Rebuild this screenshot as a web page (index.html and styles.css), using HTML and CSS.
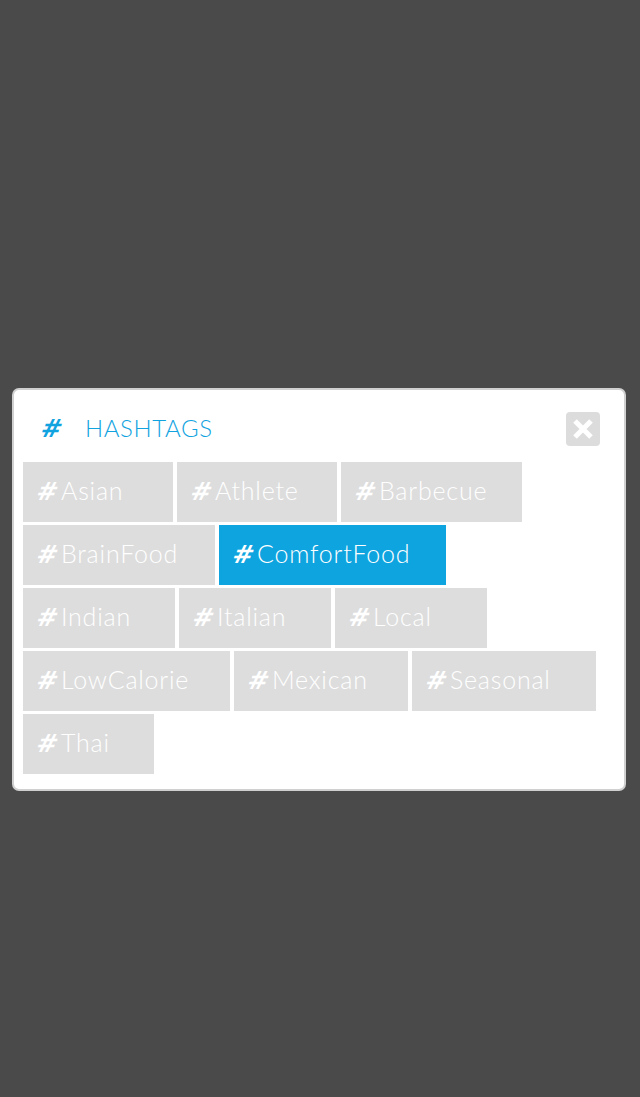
FILE: index.html
```html
<!DOCTYPE html>
<html>
<head>
<meta charset="utf-8">
<link rel="stylesheet" href="styles.css">
</head>
<body>
<div class="screen">
  <div class="modal">
    <div class="modal-header">
      <span class="title-hash">#</span>
      <span class="title">HASHTAGS</span>
      <button class="close" aria-label="Close">
        <svg width="22" height="22" viewBox="0 0 22 22"><path d="M3 3 L19 19 M19 3 L3 19" stroke="#fff" stroke-width="5" stroke-linecap="butt"/></svg>
      </button>
    </div>
    <div class="tags">
      <div class="tag-row">
        <div class="tag w-asian"><span class="label"><span class="hash">#</span>Asian</span></div>
        <div class="tag w-athlete"><span class="label"><span class="hash">#</span>Athlete</span></div>
        <div class="tag w-barbecue"><span class="label"><span class="hash">#</span>Barbecue</span></div>
      </div>
      <div class="tag-row">
        <div class="tag w-brainfood"><span class="label"><span class="hash">#</span>BrainFood</span></div>
        <div class="tag w-comfortfood active"><span class="label"><span class="hash">#</span>ComfortFood</span></div>
      </div>
      <div class="tag-row">
        <div class="tag w-indian"><span class="label"><span class="hash">#</span>Indian</span></div>
        <div class="tag w-italian"><span class="label"><span class="hash">#</span>Italian</span></div>
        <div class="tag w-local"><span class="label"><span class="hash">#</span>Local</span></div>
      </div>
      <div class="tag-row">
        <div class="tag w-lowcalorie"><span class="label"><span class="hash">#</span>LowCalorie</span></div>
        <div class="tag w-mexican"><span class="label"><span class="hash">#</span>Mexican</span></div>
        <div class="tag w-seasonal"><span class="label"><span class="hash">#</span>Seasonal</span></div>
      </div>
      <div class="tag-row">
        <div class="tag w-thai"><span class="label"><span class="hash">#</span>Thai</span></div>
      </div>
    </div>
  </div>
</div>
</body>
</html>
```
FILE: styles.css
```css
* { box-sizing: border-box; }
html, body { margin: 0; padding: 0; }
body {
  background: #4a4a4a;
  font-family: Lato, "Open Sans", sans-serif;
  width: 640px;
  height: 1097px;
  overflow: hidden;
}
.screen {
  padding: 388px 14px 0 12px;
}
.modal {
  background: #fff;
  border: 2px solid #d0d0d0;
  border-radius: 7px;
  width: 614px;
  height: 403px;
  padding: 22px 24px 15px 9px;
}
.modal-header {
  display: flex;
  align-items: center;
  height: 34px;
  margin-bottom: 16px;
  color: #11a3e0;
}
.title-hash {
  font-family: "DejaVu Sans", sans-serif;
  font-weight: 700;
  font-size: 25px;
  margin-left: 18px;
  width: 44px;
  padding-bottom: 2px;
  transform: skewX(-14deg);
}
.title {
  font-weight: 300;
  font-size: 24px;
  letter-spacing: 0.6px;
  flex: 1;
  padding-bottom: 4px;
}
.close {
  width: 34px;
  height: 34px;
  border: none;
  border-radius: 4px;
  background: #dcdcdc;
  padding: 0;
  display: flex;
  align-items: center;
  justify-content: center;
}
.tags {
  display: flex;
  flex-direction: column;
  gap: 3px;
}
.tag-row {
  display: flex;
  gap: 4px;
}
.tag {
  height: 60px;
  background: #dddddd;
  color: #fff;
  font-size: 25px;
  font-weight: 300;
  letter-spacing: 0.8px;
  display: flex;
  align-items: center;
  padding-left: 14px;
  padding-bottom: 4px;
  white-space: nowrap;
}
.tag.active { background: #0ea4e0; }
.label { display: block; }
.hash {
  display: inline-block;
  font-family: "DejaVu Sans", sans-serif;
  font-weight: 700;
  font-size: 25px;
  letter-spacing: 0;
  margin-right: 3px;
  transform: skewX(-14deg);
}
.w-asian { width: 150px; }
.w-athlete { width: 160px; }
.w-barbecue { width: 181px; }
.w-brainfood { width: 192px; }
.w-comfortfood { width: 227px; }
.w-indian { width: 152px; }
.w-italian { width: 152px; }
.w-local { width: 152px; }
.w-lowcalorie { width: 207px; }
.w-mexican { width: 174px; }
.w-seasonal { width: 184px; }
.w-thai { width: 131px; }
```
